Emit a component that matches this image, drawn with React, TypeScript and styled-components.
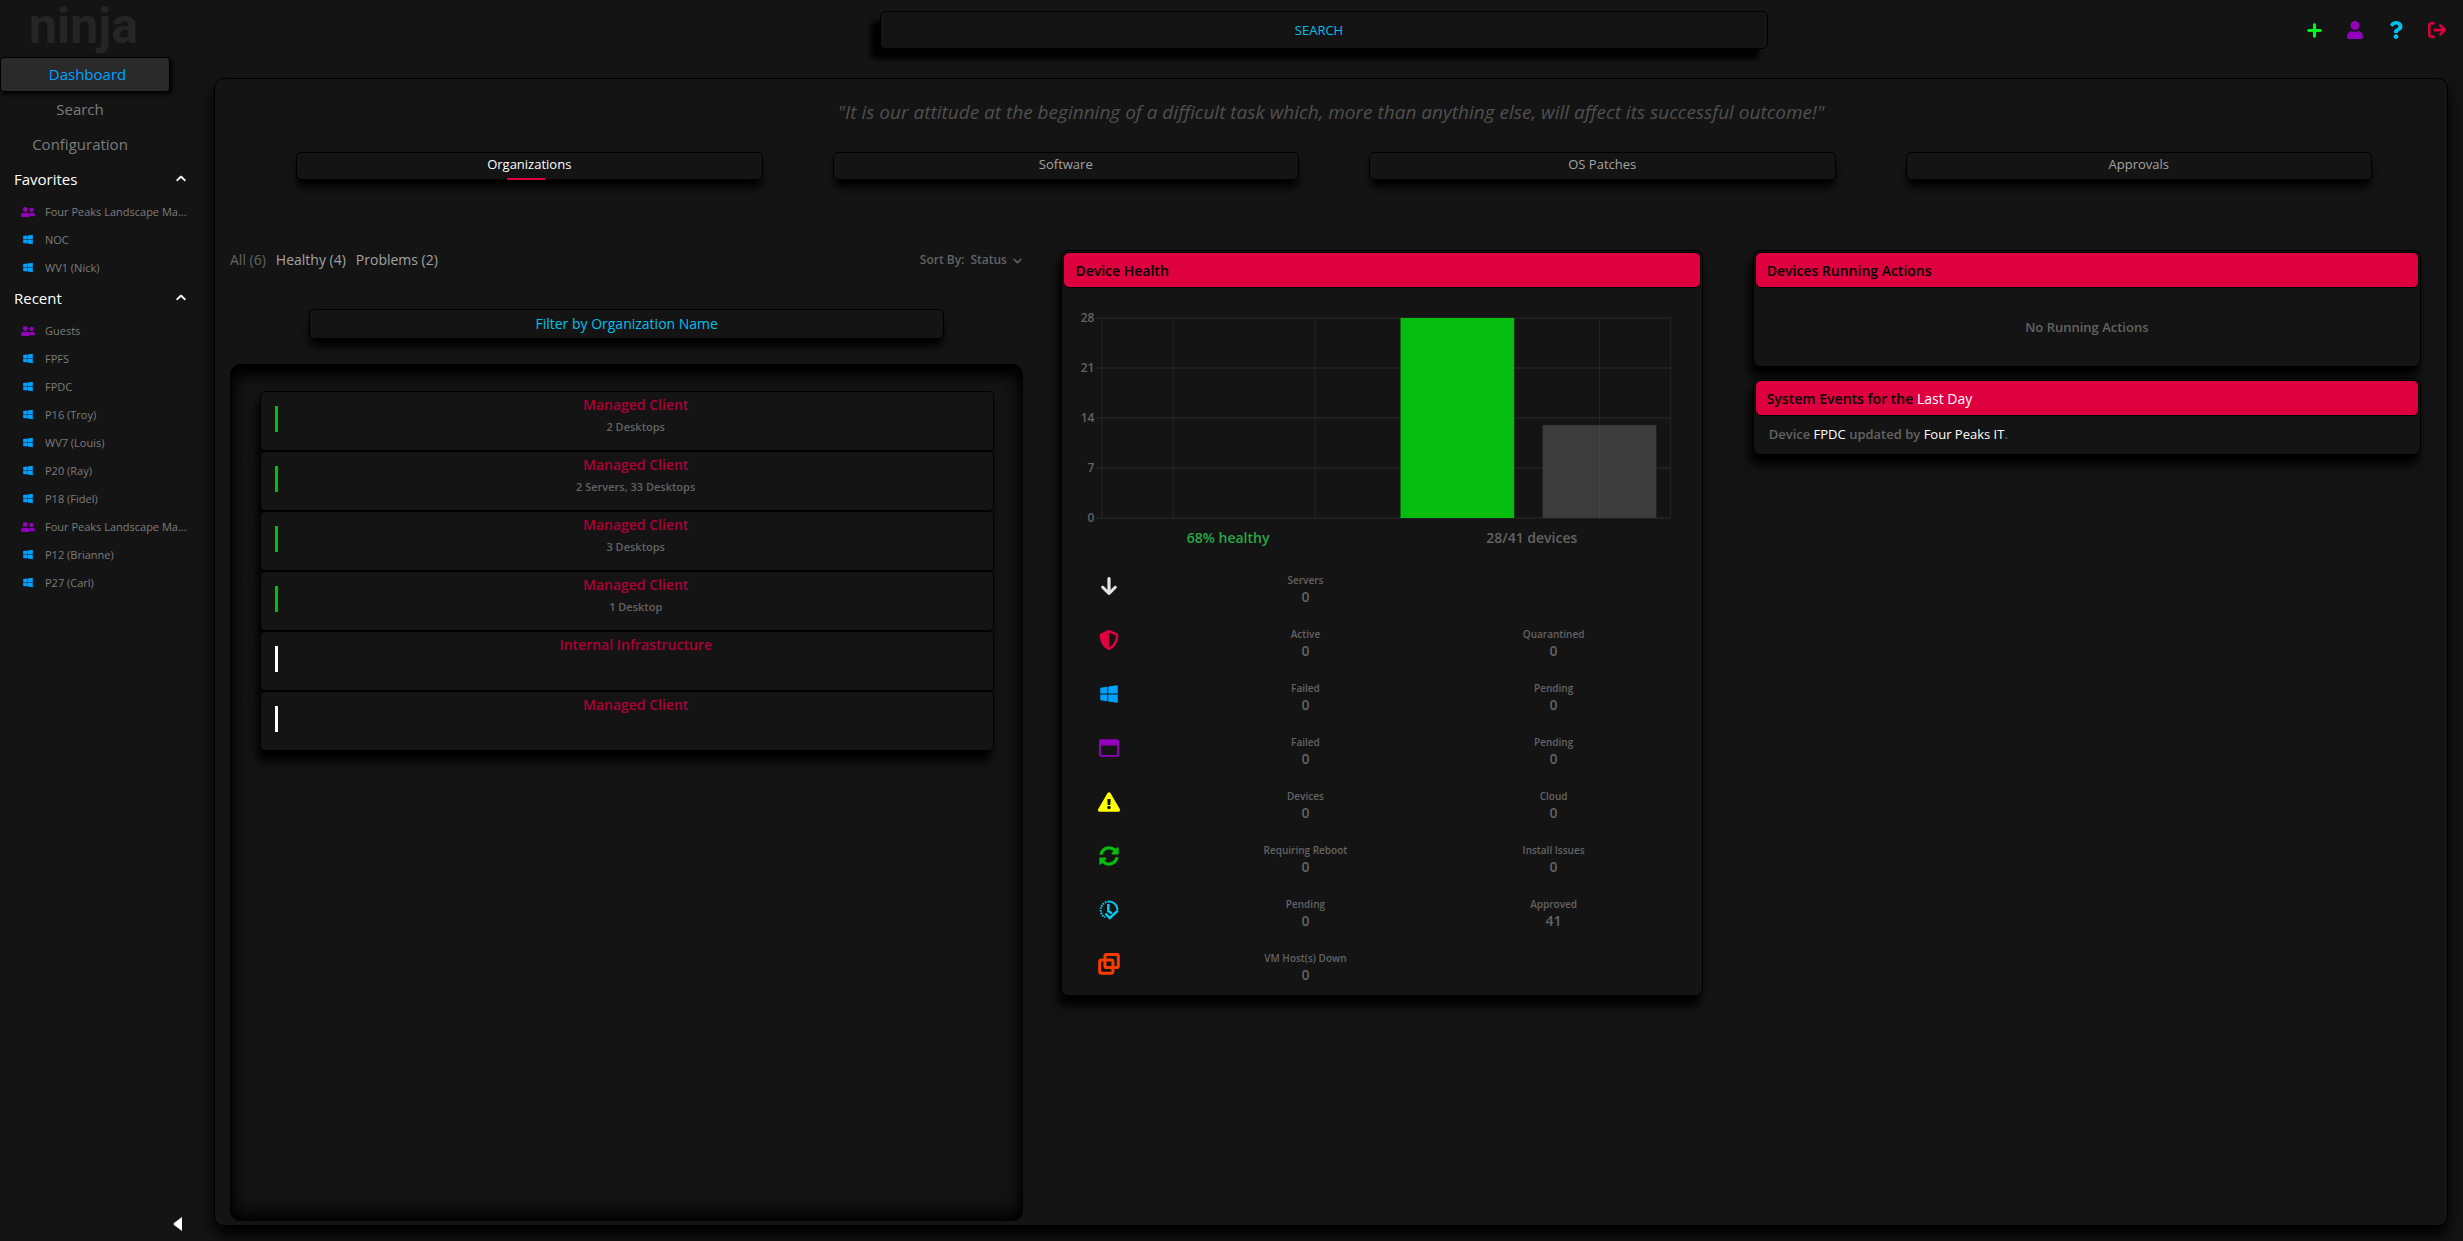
import React from "react";
import styled, { createGlobalStyle } from "styled-components";
import { FaUser, FaQuestion, FaUserFriends, FaWindows, FaExclamationTriangle, FaSyncAlt, FaRegWindowMaximize } from "react-icons/fa";
import { FaArrowDown, FaArrowRightFromBracket, FaChevronDown, FaChevronUp, FaPlus, FaShieldHalved } from "react-icons/fa6";

const c = {
  bg: "#141414",
  red: "#de003f",
  crimson: "#ad0036",
  cyan: "#00c0ee",
  blue: "#00a2ff",
  purple: "#9400bd",
  green: "#05bd0e",
  text: "#a3a3a3",
  muted: "#636363",
};

const Global = createGlobalStyle`
  * { box-sizing: border-box; }
  body {
    margin: 0;
    background: ${c.bg};
    color: ${c.muted};
    font: 400 13px/20px "Open Sans", "Noto Sans", sans-serif;
  }
  button, input, select { font: inherit; color: inherit; }
  button { background: none; border: 0; padding: 0; cursor: pointer; }
  a { color: inherit; text-decoration: none; }
  ul { list-style: none; margin: 0; padding: 0; }
  h2 { margin: 0; font: inherit; }
`;

const Page = styled.div`
  display: flex;
  min-height: 100vh;
`;

const Sidebar = styled.aside`
  display: flex;
  flex-direction: column;
  flex: 0 0 200px;
  min-width: 0;
`;

const Logo = styled.div`
  height: 57px;
  padding: 1px 0 0 29px;
  color: #252525;
  font: 700 50px/50px Roboto, sans-serif;
`;

const NavLink = styled.a<{ $active?: boolean }>`
  height: 35px;
  display: flex;
  align-items: center;
  justify-content: center;
  width: ${(p) => (p.$active ? "170px" : "160px")};
  padding: ${(p) => (p.$active ? "0 0 2px 5px" : "0 0 2px")};
  font-size: 15px;
  color: ${(p) => (p.$active ? c.blue : "#7c7c7c")};
  border: 1px solid ${(p) => (p.$active ? "#000" : "transparent")};
  border-radius: 4px;
  background: ${(p) => (p.$active ? "#2a2a2a" : "transparent")};
  box-shadow: ${(p) => (p.$active ? "2px 2px 4px #000" : "none")};
`;

const GroupToggle = styled.button`
  display: flex;
  align-items: center;
  justify-content: space-between;
  width: 100%;
  height: 35px;
  padding: 0 14px 2px;
  color: #fff;
  font-size: 15px;
  font-weight: 500;
  svg { width: 10px; height: 10px; stroke: #fff; stroke-width: 40px; }
`;

const SideItem = styled.a`
  display: flex;
  align-items: center;
  gap: 10px;
  height: 28px;
  padding: 1px 0 0 21px;
  font-size: 11px;
  white-space: nowrap;
  color: #7c7c7c;
  svg { flex: 0 0 14px; }
`;

const Collapse = styled.button`
  margin: auto 0 8px 173px;
  width: 12px;
  height: 16px;
  display: flex;
`;

const Main = styled.main`
  flex: 1;
  min-width: 0;
  display: flex;
  flex-direction: column;
  padding: 0 15px 15px 0;
`;

const Header = styled.header`
  display: grid;
  grid-template-columns: 1fr minmax(0, 888px) 1fr;
  height: 78px;
  padding-top: 11px;
`;

const TextField = styled.input`
  min-width: 0;
  border: 1px solid #000;
  border-radius: 5px;
  background: ${c.bg};
  text-align: center;
  outline: none;
  color: ${c.cyan};
  &::placeholder { color: ${c.cyan}; opacity: 1; }
`;

const SearchField = styled(TextField)`
  height: 38px;
  padding: 0 10px 0 0;
  font-size: 13px;
  font-weight: 500;
  box-shadow: -9px 10px 5px #000;
`;

const HeaderActions = styled.div`
  display: flex;
  justify-content: flex-end;
  align-items: center;
  height: 38px;
  gap: 23px;
  padding-right: 2px;
`;

const IconButton = styled.button<{ $color: string }>`
  display: flex;
  justify-content: center;
  width: 18px;
  color: ${(p) => p.$color};
`;

const Panel = styled.div`
  flex: 1;
  display: flex;
  flex-direction: column;
  margin-left: 14px;
  padding-bottom: 4px;
  border: 1px solid #000;
  border-radius: 10px;
  background: ${c.bg};
  box-shadow: 0 10px 15px #000;
`;

const Quote = styled.p`
  margin: 18px 0 25px;
  text-align: center;
  color: #4f4f4f;
  font-size: 19px;
  font-weight: 500;
  line-height: 30px;
  font-style: italic;
`;

const Tabs = styled.nav`
  display: grid;
  grid-template-columns: repeat(4, 1fr);
  gap: 70px;
  padding: 0 75px 0 81px;
`;

const Tab = styled.button<{ $active?: boolean }>`
  position: relative;
  height: 28px;
  padding-bottom: 4px;
  border: 1px solid #000;
  border-radius: 5px;
  background: ${c.bg};
  box-shadow: 0 9px 8px -2px #000;
  font-weight: 500;
  color: ${(p) => (p.$active ? "#fff" : c.text)};
  &::after {
    content: "";
    display: ${(p) => (p.$active ? "block" : "none")};
    position: absolute;
    bottom: -1px;
    left: calc(50% - 22px);
    width: 38px;
    height: 2px;
    background: ${c.red};
  }
`;

const Columns = styled.div`
  flex: 1;
  display: grid;
  grid-template-columns: 793fr 641fr 680fr;
  gap: 38px;
  padding: 70px 26px 0 15px;
`;

const OrgColumn = styled.section`
  display: flex;
  flex-direction: column;
`;

const FilterBar = styled.div`
  display: flex;
  align-items: center;
  height: 20px;
  gap: 10px;
  font-size: 14px;
`;

const FilterButton = styled.button<{ $muted?: boolean }>`
  font-weight: 500;
  color: ${(p) => (p.$muted ? c.muted : c.text)};
`;

const SortLabel = styled.label`
  display: flex;
  align-items: center;
  gap: 6px;
  margin-left: auto;
  padding-right: 1px;
  font-size: 12px;
  font-weight: 600;
  svg { width: 9px; height: 9px; stroke: currentColor; stroke-width: 40px; }
`;

const SortSelect = styled.select`
  appearance: none;
  border: 0;
  padding: 0;
  background: ${c.bg};
  outline: none;
`;

const FilterField = styled(TextField)`
  width: 80%;
  height: 30px;
  margin: 39px auto 25px;
  padding: 0 0 2px;
  font-size: 14px;
  font-weight: 500;
  box-shadow: 0 8px 8px -1px #000;
`;

const OrgList = styled.ul`
  flex: 1;
  padding: 26px 28px 26px 29px;
  border: 1px solid #000;
  border-radius: 10px;
  box-shadow: inset 0 14px 14px -4px #000, inset 0 0 16px #000, inset 0 -16px 24px -14px #000;
`;

const OrgRow = styled.li`
  display: flex;
  height: 60px;
  padding: 14px 0 0 14px;
  border: 1px solid #000;
  border-radius: 5px;
  background: ${c.bg};
  box-shadow: -3px 10px 10px #000;
`;

const StatusBar = styled.span<{ $ok: boolean }>`
  width: 3px;
  height: 26px;
  background: ${(p) => (p.$ok ? c.green : "#fff")};
`;

const OrgText = styled.div`
  flex: 1;
  margin-top: -11px;
  text-align: center;
  font-size: 11px;
  font-weight: 600;
`;

const OrgName = styled.a`
  display: block;
  margin-bottom: 2px;
  font-size: 14px;
  font-weight: 600;
  color: ${c.crimson};
`;

const Card = styled.section`
  align-self: start;
  padding: 2px 1px 0;
  border: 1px solid #000;
  border-radius: 7px;
  background: ${c.bg};
  box-shadow: -3px 10px 10px #000;
`;

const CardTitle = styled.h2`
  height: 36px;
  margin-top: -1px;
  padding: 0 11px;
  border: 1px solid #000;
  border-radius: 6px;
  background: ${c.red};
  color: #000;
  font-size: 14px;
  font-weight: 600;
  line-height: 35px;
  a { color: #fff; font-weight: 500; }
`;

const Chart = styled.div`
  display: flex;
  gap: 2px;
  padding: 20px 30px 0 0;
`;

const YAxis = styled.div`
  flex: 0 0 31px;
  display: flex;
  flex-direction: column;
  justify-content: space-between;
  height: 220px;
  text-align: right;
  font-size: 12px;
  font-weight: 600;
`;

const Plot = styled.svg`
  flex: 1;
  min-width: 0;
  height: 202px;
  margin-top: 9px;
  display: block;
`;

const Summary = styled.div`
  display: flex;
  justify-content: space-around;
  padding: 0 15px;
  font-size: 14px;
  font-weight: 600;
  strong { color: #28a745; font-weight: 600; }
`;

const Metrics = styled.div`
  padding: 13px 23px 2px 35px;
`;

const MetricRow = styled.div`
  display: grid;
  grid-template-columns: 83px 1fr 1fr;
  align-items: center;
  height: 54px;
`;

const MetricIcon = styled.span<{ $color: string }>`
  display: flex;
  justify-content: center;
  width: 22px;
  margin-bottom: 4px;
  color: ${(p) => p.$color};
`;

const Metric = styled.div`
  display: flex;
  flex-direction: column;
  align-items: center;
  padding-top: 1px;
  font-size: 10px;
  font-weight: 600;
  line-height: 16px;
  b { font-size: 14px; font-weight: 600; line-height: 18px; }
`;

const SideCards = styled.div`
  display: flex;
  flex-direction: column;
  gap: 11px;
  padding-left: 12px;
  & > section { align-self: stretch; }
`;

const Empty = styled.p`
  margin: 0;
  padding: 29px 0;
  text-align: center;
  font-weight: 600;
`;

const EventLine = styled.p`
  margin: 0;
  padding: 8px 14px 10px;
  font-weight: 600;
  a { color: #fff; font-weight: 500; }
`;

type Kind = "group" | "windows";

const favorites: [Kind, string][] = [
  ["group", "Four Peaks Landscape Ma..."],
  ["windows", "NOC"],
  ["windows", "WV1 (Nick)"],
];

const recent: [Kind, string][] = [
  ["group", "Guests"],
  ["windows", "FPFS"],
  ["windows", "FPDC"],
  ["windows", "P16 (Troy)"],
  ["windows", "WV7 (Louis)"],
  ["windows", "P20 (Ray)"],
  ["windows", "P18 (Fidel)"],
  ["group", "Four Peaks Landscape Ma..."],
  ["windows", "P12 (Brianne)"],
  ["windows", "P27 (Carl)"],
];

const organizations = [
  { name: "Managed Client", detail: "2 Desktops", ok: true },
  { name: "Managed Client", detail: "2 Servers, 33 Desktops", ok: true },
  { name: "Managed Client", detail: "3 Desktops", ok: true },
  { name: "Managed Client", detail: "1 Desktop", ok: true },
  { name: "Internal Infrastructure", detail: "", ok: false },
  { name: "Managed Client", detail: "", ok: false },
];

const ClockCheck = () => (
  <svg width="20" height="20" viewBox="0 0 20 20" fill="none" stroke="currentColor" strokeWidth="2">
    <path d="M10 1.5A8.5 8.5 0 0 1 18.5 10" />
    <path d="M10 1.5A8.5 8.5 0 0 0 6 17.4" strokeDasharray="1.6 1" />
    <path d="M9.3 4v7l3.6 2.4" strokeWidth="2.4" />
    <path d="M6.4 13.6l4.4 4.4 8-7.4" strokeWidth="2.4" />
  </svg>
);

const Clones = () => (
  <svg width="22" height="22" viewBox="0 0 22 22" fill="none" stroke="currentColor" strokeWidth="3">
    <rect x="6.9" y="1.6" width="13.4" height="13" rx="1.6" />
    <rect x="1.7" y="7" width="13.2" height="13.2" rx="1.6" />
  </svg>
);

const metrics: { icon: React.ReactNode; color: string; cells: [string, number][] }[] = [
  { icon: <FaArrowDown size={20} stroke="currentColor" strokeWidth={16} />, color: "#e6e6e6", cells: [["Servers", 0]] },
  { icon: <FaShieldHalved size={20} />, color: c.red, cells: [["Active", 0], ["Quarantined", 0]] },
  { icon: <FaWindows size={20} />, color: c.blue, cells: [["Failed", 0], ["Pending", 0]] },
  { icon: <FaRegWindowMaximize size={20} />, color: c.purple, cells: [["Failed", 0], ["Pending", 0]] },
  { icon: <FaExclamationTriangle size={22} />, color: "#ffff00", cells: [["Devices", 0], ["Cloud", 0]] },
  { icon: <FaSyncAlt size={20} />, color: c.green, cells: [["Requiring Reboot", 0], ["Install Issues", 0]] },
  { icon: <ClockCheck />, color: "#00cdf0", cells: [["Pending", 0], ["Approved", 41]] },
  { icon: <Clones />, color: "#fa3c00", cells: [["VM Host(s) Down", 0]] },
];

const ticks = [28, 21, 14, 7, 0];
const bars = [
  { slot: 2, value: 28, fill: c.green },
  { slot: 3, value: 13, fill: "#3c3c3c" },
];

function Group({ title, items }: { title: string; items: [Kind, string][] }) {
  return (
    <section>
      <GroupToggle>
        {title}
        <FaChevronUp />
      </GroupToggle>
      <ul>
        {items.map(([kind, label]) => (
          <li key={label}>
            <SideItem href="#">
              {kind === "group" ? <FaUserFriends size={14} color={c.purple} /> : <FaWindows size={11} color={c.blue} />}
              <span>{label}</span>
            </SideItem>
          </li>
        ))}
      </ul>
    </section>
  );
}

function HealthChart() {
  return (
    <Chart>
      <YAxis>
        {ticks.map((t) => (
          <span key={t}>{t}</span>
        ))}
      </YAxis>
      <Plot role="img" aria-label="Device health">
        <svg x="6" width="99%" height="202" overflow="visible">
          {ticks.map((t) => (
            <line key={t} x1="-6" x2="100%" y1={201 - (t / 28) * 200} y2={201 - (t / 28) * 200} stroke="#1f1f1f" strokeWidth="2" />
          ))}
          {["0%", "12.5%", "37.5%", "62.5%", "87.5%", "100%"].map((x) => (
            <line key={x} x1={x} x2={x} y1="1" y2="201" stroke="#242424" strokeWidth="1" />
          ))}
          {bars.map((b) => (
            <rect key={b.slot} x={`${b.slot * 25 + 2.5}%`} width="20%" y={201 - (b.value / 28) * 200} height={(b.value / 28) * 200} fill={b.fill} />
          ))}
          <line x1="87.5%" x2="87.5%" y1="108" y2="201" stroke="#454545" />
        </svg>
      </Plot>
    </Chart>
  );
}

export default function App() {
  return (
    <>
      <Global />
      <Page>
        <Sidebar>
          <Logo>ninja</Logo>
          <nav>
            <NavLink href="#" $active>Dashboard</NavLink>
            <NavLink href="#">Search</NavLink>
            <NavLink href="#">Configuration</NavLink>
          </nav>
          <Group title="Favorites" items={favorites} />
          <Group title="Recent" items={recent} />
          <Collapse aria-label="Collapse sidebar">
            <svg width="10" height="14" viewBox="0 0 10 14" fill="#fff">
              <path d="M9 0v14L1 8Q0 7 1 6Z" />
            </svg>
          </Collapse>
        </Sidebar>
        <Main>
          <Header>
            <span />
            <SearchField placeholder="SEARCH" aria-label="Search" />
            <HeaderActions>
              <IconButton $color="#00ff1e" aria-label="Add"><FaPlus size={17} stroke="currentColor" strokeWidth={28} /></IconButton>
              <IconButton $color={c.purple} aria-label="Account"><FaUser size={18} /></IconButton>
              <IconButton $color={c.cyan} aria-label="Help"><FaQuestion size={18} /></IconButton>
              <IconButton $color={c.red} aria-label="Log out"><FaArrowRightFromBracket size={18} stroke="currentColor" strokeWidth={16} /></IconButton>
            </HeaderActions>
          </Header>
          <Panel>
            <Quote>
              "It is our attitude at the beginning of a difficult task which, more than anything else, will affect its successful outcome!"
            </Quote>
            <Tabs>
              <Tab $active>Organizations</Tab>
              <Tab>Software</Tab>
              <Tab>OS Patches</Tab>
              <Tab>Approvals</Tab>
            </Tabs>
            <Columns>
              <OrgColumn>
                <FilterBar>
                  <FilterButton $muted>All (6)</FilterButton>
                  <FilterButton>Healthy (4)</FilterButton>
                  <FilterButton>Problems (2)</FilterButton>
                  <SortLabel>
                    Sort By:
                    <SortSelect>
                      <option>Status</option>
                    </SortSelect>
                    <FaChevronDown />
                  </SortLabel>
                </FilterBar>
                <FilterField placeholder="Filter by Organization Name" aria-label="Filter by Organization Name" />
                <OrgList>
                  {organizations.map((o, i) => (
                    <OrgRow key={i}>
                      <StatusBar $ok={o.ok} />
                      <OrgText>
                        <OrgName href="#">{o.name}</OrgName>
                        {o.detail}
                      </OrgText>
                    </OrgRow>
                  ))}
                </OrgList>
              </OrgColumn>
              <Card>
                <CardTitle>Device Health</CardTitle>
                <HealthChart />
                <Summary>
                  <strong>68% healthy</strong>
                  <span>28/41 devices</span>
                </Summary>
                <Metrics>
                  {metrics.map((m, i) => (
                    <MetricRow key={i}>
                      <MetricIcon $color={m.color}>{m.icon}</MetricIcon>
                      {m.cells.map(([label, value]) => (
                        <Metric key={label}>
                          {label}
                          <b>{value}</b>
                        </Metric>
                      ))}
                    </MetricRow>
                  ))}
                </Metrics>
              </Card>
              <SideCards>
                <Card>
                  <CardTitle>Devices Running Actions</CardTitle>
                  <Empty>No Running Actions</Empty>
                </Card>
                <Card>
                  <CardTitle>
                    System Events for the <a href="#">Last Day</a>
                  </CardTitle>
                  <EventLine>
                    Device <a href="#">FPDC</a> updated by <a href="#">Four Peaks IT</a>.
                  </EventLine>
                </Card>
              </SideCards>
            </Columns>
          </Panel>
        </Main>
      </Page>
    </>
  );
}
